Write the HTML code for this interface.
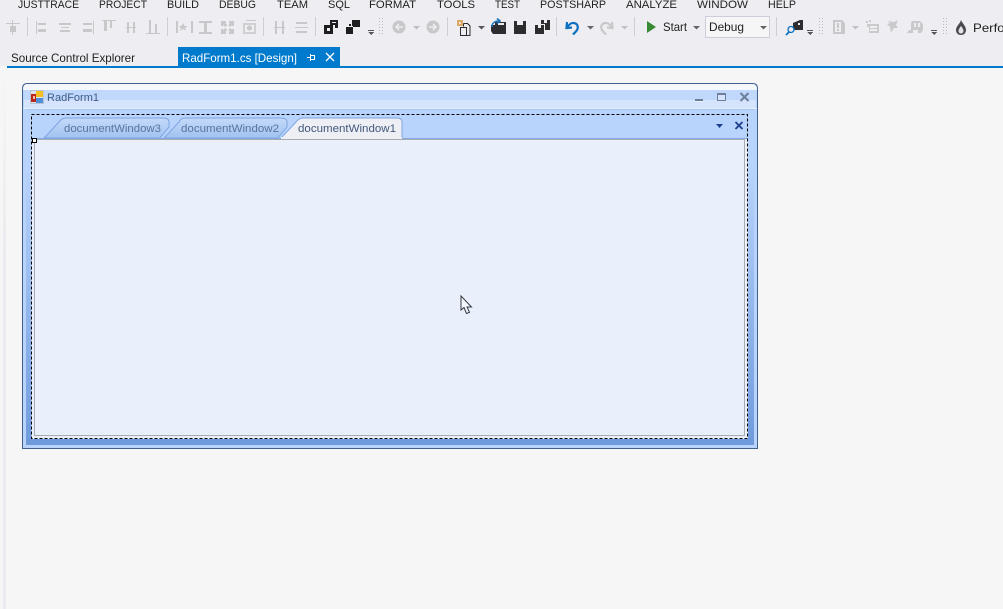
<!DOCTYPE html>
<html><head><meta charset="utf-8"><style>
html,body{margin:0;padding:0;background:#f6f6f6;overflow:hidden}
svg{display:block;font-family:"Liberation Sans",sans-serif}
</style></head><body>
<svg width="1003" height="609" viewBox="0 0 1003 609" xmlns="http://www.w3.org/2000/svg">
<defs>
<linearGradient id="band" x1="0" y1="0" x2="0" y2="1"><stop offset="0" stop-color="#b9d4fc"/><stop offset="1" stop-color="#6f9bdc"/></linearGradient>
<linearGradient id="strip" x1="0" y1="0" x2="0" y2="1"><stop offset="0" stop-color="#f6f6f6"/><stop offset=".35" stop-color="#ebebef"/><stop offset="1" stop-color="#ebebef"/></linearGradient>
<linearGradient id="itab" x1="0" y1="0" x2="0" y2="1"><stop offset="0" stop-color="#c4daf9"/><stop offset="1" stop-color="#a2c2f1"/></linearGradient>
</defs>
<rect width="1003" height="609" fill="#f6f6f6"/>
<rect width="1003" height="66" fill="#eeeef2"/>
<rect x="3" y="68" width="3" height="541" fill="url(#strip)"/>
<rect x="7" y="66" width="996" height="2" fill="#007acc"/>
<g font-size="11" fill="#1e1e1e" lengthAdjust="spacingAndGlyphs">
<text x="18" y="8" textLength="61" lengthAdjust="spacingAndGlyphs">JUSTTRACE</text><text x="99" y="8" textLength="48" lengthAdjust="spacingAndGlyphs">PROJECT</text><text x="167" y="8" textLength="32" lengthAdjust="spacingAndGlyphs">BUILD</text><text x="219" y="8" textLength="37" lengthAdjust="spacingAndGlyphs">DEBUG</text><text x="277" y="8" textLength="31" lengthAdjust="spacingAndGlyphs">TEAM</text><text x="328" y="8" textLength="22" lengthAdjust="spacingAndGlyphs">SQL</text><text x="369" y="8" textLength="47" lengthAdjust="spacingAndGlyphs">FORMAT</text><text x="437" y="8" textLength="38" lengthAdjust="spacingAndGlyphs">TOOLS</text><text x="495" y="8" textLength="25" lengthAdjust="spacingAndGlyphs">TEST</text><text x="540" y="8" textLength="66" lengthAdjust="spacingAndGlyphs">POSTSHARP</text><text x="626" y="8" textLength="51" lengthAdjust="spacingAndGlyphs">ANALYZE</text><text x="697" y="8" textLength="51" lengthAdjust="spacingAndGlyphs">WINDOW</text><text x="768" y="8" textLength="28" lengthAdjust="spacingAndGlyphs">HELP</text>
</g>
<!-- disabled layout icons -->
<g fill="#c8c8ca" shape-rendering="crispEdges">
<rect x="6" y="23" width="14" height="1"/><rect x="12" y="20" width="1" height="15"/><rect x="10" y="26" width="6" height="6"/>
<rect x="36" y="21" width="1" height="13"/><rect x="38" y="23" width="8" height="2"/><rect x="38" y="29" width="8" height="3"/>
<rect x="59" y="23" width="12" height="2"/><rect x="61" y="27" width="8" height="1"/><rect x="60" y="30" width="10" height="2"/>
<rect x="93" y="21" width="1" height="13"/><rect x="83" y="23" width="9" height="2"/><rect x="83" y="29" width="9" height="3"/>
<rect x="102" y="20" width="14" height="1"/><rect x="104" y="21" width="3" height="10"/><rect x="110" y="21" width="2" height="7"/>
<rect x="127" y="22" width="2" height="11"/><rect x="133" y="22" width="2" height="11"/><rect x="126" y="27" width="10" height="1"/>
<rect x="146" y="33" width="14" height="1"/><rect x="149" y="20" width="2" height="13"/><rect x="155" y="24" width="2" height="9"/>
<rect x="176" y="21" width="2" height="12"/><rect x="191" y="21" width="2" height="12"/>
<path d="M183 23l1.500 3h3l-2.500 2 1 3-3-2-3 2 1-3-2.500-2h3z"/>
<rect x="199" y="21" width="13" height="2"/><rect x="199" y="32" width="13" height="2"/><rect x="204" y="23" width="3" height="9"/>
<path d="M221 21h5v2h-1l2 2-2 2-2-2-0 1h-2zM234 21h-5v2h1l-2 2 2 2 2-2 0 1h2zM221 34h5v-2h-1l2-2-2-2-2 2 0-1h-2zM234 34h-5v-2h1l-2-2 2-2 2 2 0-1h2z"/>
<path d="M243 23h13v11h-13zM245 25v7h9v-7z" fill-rule="evenodd" opacity=".8"/>
<circle cx="249.500" cy="28" r="2.500"/><rect x="246" y="20" width="10" height="1"/>
<rect x="275" y="21" width="2" height="13"/><rect x="282" y="21" width="2" height="13"/><rect x="274" y="27" width="11" height="1"/>
<rect x="296" y="22" width="11" height="2"/><rect x="295" y="27" width="13" height="1"/><rect x="296" y="31" width="11" height="2"/>
</g>
<!-- separators -->
<g fill="#ccced8" shape-rendering="crispEdges">
<rect x="27" y="17" width="1" height="19"/><rect x="167" y="17" width="1" height="19"/><rect x="263" y="17" width="1" height="19"/><rect x="315" y="17" width="1" height="19"/>
<rect x="447" y="17" width="1" height="19"/><rect x="556" y="17" width="1" height="19"/><rect x="634" y="17" width="1" height="19"/><rect x="776" y="17" width="1" height="19"/>
</g>
<!-- gripper dots -->
<g fill="#b8b8c0" shape-rendering="crispEdges">
<path d="M379 18h1v1h-1zM382 18h1v1h-1zM379 21h1v1h-1zM382 21h1v1h-1zM379 24h1v1h-1zM382 24h1v1h-1zM379 27h1v1h-1zM382 27h1v1h-1zM379 30h1v1h-1zM382 30h1v1h-1zM379 33h1v1h-1zM382 33h1v1h-1z"/>
<path d="M819 18h1v1h-1zM822 18h1v1h-1zM819 21h1v1h-1zM822 21h1v1h-1zM819 24h1v1h-1zM822 24h1v1h-1zM819 27h1v1h-1zM822 27h1v1h-1zM819 30h1v1h-1zM822 30h1v1h-1zM819 33h1v1h-1zM822 33h1v1h-1z"/>
<path d="M943 18h1v1h-1zM946 18h1v1h-1zM943 21h1v1h-1zM946 21h1v1h-1zM943 24h1v1h-1zM946 24h1v1h-1zM943 27h1v1h-1zM946 27h1v1h-1zM943 30h1v1h-1zM946 30h1v1h-1zM943 33h1v1h-1zM946 33h1v1h-1z"/>
</g>
<!-- order icons -->
<g fill="#1e1e20" shape-rendering="crispEdges">
<path d="M324 25h9v9h-9zM327 28v3h3v-3z" fill-rule="evenodd"/><path d="M330 20h8v8h-3v-3h-5z M332 22v1h4v3h0v-4z" fill-rule="evenodd"/>
<path d="M346 27h7v7h-7z"/><path d="M352 20h8v7h-7v-1h-1z"/><rect x="349" y="24" width="2" height="2"/>
</g>
<g fill="#55555a" shape-rendering="crispEdges">
<rect x="368" y="30" width="6" height="1"/><path d="M368 32h6l-3 3z"/>
<rect x="807" y="30" width="6" height="1"/><path d="M807 32h6l-3 3z"/>
<rect x="931" y="30" width="6" height="1"/><path d="M931 32h6l-3 3z"/>
</g>
<!-- back/forward -->
<circle cx="399" cy="27" r="6.500" fill="#c8c8ca"/><path d="M403 27h-7M399 24l-3 3 3 3" stroke="#eeeef2" stroke-width="1.500" fill="none"/>
<circle cx="433" cy="27" r="6.500" fill="#c8c8ca"/><path d="M429 27h7M433 24l3 3-3 3" stroke="#eeeef2" stroke-width="1.500" fill="none"/>
<path d="M413 26h7l-3.500 3.500z" fill="#bdbdc0"/>
<!-- new project -->
<g shape-rendering="crispEdges">
<path d="M457 20h6v6h-6z" fill="#dba968"/><path d="M459 22h2v2h-2z" fill="#f3e2c8"/>
<path d="M463.500 23.500h4l2.500 2.500v9.500h-4M463.500 23.500v3" fill="none" stroke="#2d2d30"/>
<rect x="460.500" y="27.500" width="6" height="8" fill="#eeeef2" stroke="#2d2d30"/>
</g>
<path d="M478 26h7l-3.500 3.500z" fill="#55555a"/>
<!-- open -->
<path d="M491 25h4v-3h11v12h-13l-2-3z" fill="#2d2d30"/><path d="M498 23h6v2h-6z" fill="#eeeef2"/>
<path d="M492 27c0-4 3-6 7-6M497 18.500l3 2.500-3 2.500" fill="none" stroke="#1e72b8" stroke-width="1.600"/>
<!-- save -->
<path d="M514 21h12v13h-12z" fill="#2d2d30"/><path d="M517 21h6v4h-6z" fill="#eeeef2"/>
<!-- save all -->
<path d="M535 25h9v9h-9z" fill="#2d2d30"/><path d="M538 25h3v3h-3z" fill="#eeeef2"/>
<path d="M541 20h9v10h-5v-6h-4z" fill="#2d2d30"/><path d="M544 20h3v3h-3z" fill="#eeeef2"/>
<!-- undo -->
<path d="M567 22l-.5 6 5.500-.5M567 27.500c2-3 4.500-5 7-4.500c3 .5 4.500 3 3.500 6c-.7 2-2.500 3.500-4.500 5.500" fill="none" stroke="#0e70c0" stroke-width="2.200"/>
<path d="M587 26h7l-3.500 3.500z" fill="#66666a"/>
<!-- redo -->
<path d="M612 22l.5 6-5.500-.5M612 27.500c-2-3-4.500-5-7-4.500c-3 .5-4.500 3-3.500 6c.7 2 2.500 3.500 4.500 5.500" fill="none" stroke="#c8c8ca" stroke-width="2.200"/>
<path d="M621 26h7l-3.500 3.500z" fill="#c0c0c4"/>
<!-- play -->
<path d="M647 21l9 6-9 6z" fill="#388a34"/>
<text x="663" y="31" font-size="12" fill="#1e1e1e" textLength="24" lengthAdjust="spacingAndGlyphs">Start</text>
<path d="M693 26h7l-3.500 3.500z" fill="#66666a"/>
<!-- combo -->
<rect x="705.500" y="16.500" width="64" height="21" fill="#f6f6f6" stroke="#cccedb"/>
<text x="709" y="31" font-size="12" fill="#1e1e1e" textLength="35" lengthAdjust="spacingAndGlyphs">Debug</text>
<path d="M760 26h7l-3.500 3.500z" fill="#66666a"/>
<!-- attach icon -->
<path d="M793 23l7-3h3v10h-10z" fill="#2d2d30"/><rect x="798" y="23" width="2" height="2" fill="#eeeef2"/>
<circle cx="791" cy="29.500" r="3" fill="#eeeef2" stroke="#0e70c0" stroke-width="1.300"/><path d="M789 32l-3 3" stroke="#0e70c0" stroke-width="1.800"/>
<!-- disabled icons -->
<path d="M833 20h9l3 3v11h-12z" fill="#c8c8ca"/><path d="M835 22h6v10h-6z" fill="#eeeef2"/><rect x="837" y="23" width="2" height="5" fill="#c8c8ca"/><rect x="837" y="29" width="2" height="2" fill="#c8c8ca"/>
<path d="M852 26h7l-3.500 3.500z" fill="#c0c0c4"/>
<g fill="#cacacd"><path d="M867 24h12v9h-10v-6h-2z"/><rect x="870" y="26" width="7" height="5" fill="#eeeef2"/><rect x="870" y="28" width="7" height="1"/>
<rect x="866" y="21" width="2" height="2"/><rect x="869" y="20" width="2" height="2"/>
<path d="M888 21l6 1 4-2-2 5 2 3-4 0-3 5-1-6-3-3 3-1z"/>
<path d="M912 21h8l3 3v6l-2 3h-3v-3h-5v3h-6l2-3h2v-7z"/><rect x="914" y="23" width="6" height="4" fill="#eeeef2"/><rect x="916" y="23" width="2" height="4"/></g>
<!-- flame -->
<path d="M961 20c1 3 5 6 5 10c0 3-2 5-5 5s-5-2-5-5c0-4 4-6 5-10z" fill="#4a4a4e"/><path d="M961 26c1.500 2 2.500 3.500 2.500 5c0 1.200-1 2.500-2.500 2.500s-2.500-1.300-2.500-2.500c0-1.500 1-3 2.500-5z" fill="#e4e4e8"/>
<text x="973" y="32" font-size="12" fill="#1e1e1e" textLength="36" lengthAdjust="spacingAndGlyphs">Perfor</text>
<!-- doc tabs -->
<text x="11" y="62" font-size="12" fill="#1e1e1e" textLength="124" lengthAdjust="spacingAndGlyphs">Source Control Explorer</text>
<rect x="178" y="47" width="162" height="20" fill="#007acc"/>
<text x="182" y="62" font-size="12" fill="#ffffff" textLength="115" lengthAdjust="spacingAndGlyphs">RadForm1.cs [Design]</text>
<g fill="#fff" shape-rendering="crispEdges"><rect x="307" y="57" width="3" height="1"/><rect x="310" y="54" width="1" height="7"/><rect x="311" y="55" width="4" height="1"/><rect x="311" y="59" width="4" height="1"/><rect x="314" y="55" width="1" height="5"/></g>
<path d="M326 53l8 8M334 53l-8 8" stroke="#fff" stroke-width="1.300"/>
<!-- form -->
<path d="M22.500 448.500V88.500q0-5 5-5H752.500q5 0 5 5V448.500z" fill="#b9d4fc" stroke="#41618f"/>
<path d="M23 90q0-6 5-6H752q5 0 5 6z" fill="#f4f7fc"/>
<rect x="24" y="90" width="732" height="10" fill="#c0d8fc"/>
<rect x="24" y="100" width="732" height="8" fill="#d5e4fc"/>
<rect x="23" y="108" width="734" height="1" fill="#e6effd"/>
<rect x="23" y="109" width="734" height="339" fill="#b9d4fc"/>
<rect x="26" y="165" width="5" height="280" fill="url(#band)"/>
<rect x="748" y="165" width="6" height="280" fill="url(#band)"/>
<rect x="26" y="439" width="728" height="6" fill="#6f9bdc"/>
<rect x="26" y="109" width="728" height="1" fill="#a4c4f4"/>
<rect x="32" y="138" width="716" height="301" fill="#e9f0fb"/>
<rect x="32" y="138" width="716" height="1" fill="#84a9e4"/>
<!-- form title -->
<g shape-rendering="crispEdges">
<rect x="30" y="90" width="14" height="14" fill="#b8c4d6"/>
<rect x="31" y="91" width="12" height="12" fill="#dbe3f0"/>
<rect x="31" y="94" width="5" height="8" fill="#b8261c"/><rect x="33" y="96" width="2" height="3" fill="#f0c0a0"/>
<rect x="36" y="91" width="7" height="6" fill="#f2c020"/><rect x="36" y="98" width="7" height="5" fill="#4f8ed8"/>
</g>
<text x="47" y="101" font-size="11" fill="#3f5a86" textLength="52" lengthAdjust="spacingAndGlyphs">RadForm1</text>
<rect x="695" y="99" width="8" height="2" fill="#6e7f99"/><rect x="695" y="101" width="8" height="1" fill="#e8f0fc"/>
<rect x="717.500" y="93.500" width="8" height="7" fill="#d5e4fc" stroke="#6e7f99"/><rect x="717" y="93" width="9" height="2" fill="#6e7f99"/>
<path d="M740.500 93l8 8M748.500 93l-8 8" stroke="#6e7f99" stroke-width="2"/>
<!-- tabs -->
<path d="M164 138L179 122Q181 118 185 118H280Q287 118 287 122V127L278 138Z" fill="url(#itab)" stroke="#7ea5e0"/>
<path d="M44 138L59 122Q62 118 66 118H163Q169 118 169 122V127L160 138Z" fill="url(#itab)" stroke="#7ea5e0"/>
<path d="M281 138L296 122Q299 118 303 118H397Q402 118 402 122V138Z" fill="#eeeff4" stroke="#7ea5e0"/>
<rect x="281" y="137" width="121" height="2" fill="#eeeff4"/>
<g font-size="11" fill="#59749c">
<text x="64" y="132" textLength="97" lengthAdjust="spacingAndGlyphs">documentWindow3</text>
<text x="181" y="132" textLength="98" lengthAdjust="spacingAndGlyphs">documentWindow2</text>
</g>
<text x="298" y="132" font-size="11" fill="#41587e" textLength="98" lengthAdjust="spacingAndGlyphs">documentWindow1</text>
<path d="M716 124h7l-3.500 4z" fill="#1d3f8c"/>
<path d="M735.500 122l7 7M742.500 122l-7 7" stroke="#1d3f8c" stroke-width="1.800"/>
<!-- selection -->
<rect x="31.500" y="114.500" width="716" height="324" fill="none" stroke="#000" stroke-dasharray="3 2" shape-rendering="crispEdges"/>
<rect x="34.500" y="139.500" width="710" height="296" fill="none" stroke="#666" stroke-dasharray="1 1" shape-rendering="crispEdges"/>
<rect x="32.500" y="138.500" width="4" height="4" fill="#fff" stroke="#000" shape-rendering="crispEdges"/>
<!-- cursor -->
<path d="M461 296V310l3-2.500 2.500 6 3-1.200-2.500-5.300h4.500z" fill="#f4f7fc" stroke="#333a44" stroke-width="1"/>
</svg>
</body></html>
